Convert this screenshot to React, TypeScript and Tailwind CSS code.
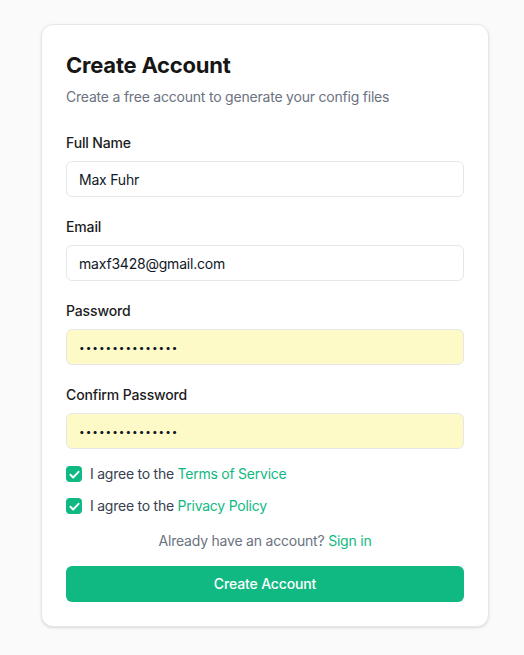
import React from "react";

function Check() {
  return (
    <span className="flex h-4 w-4 shrink-0 items-center justify-center rounded-[4px] bg-[#10b981]">
      <svg viewBox="0 0 24 24" className="h-[13px] w-[13px]" fill="none" stroke="white" strokeWidth={3.5} strokeLinecap="round" strokeLinejoin="round">
        <path d="M4.5 12.5l5 5L19.5 7" />
      </svg>
    </span>
  );
}

function Field({ label, value, password = false }: { label: string; value: string; password?: boolean }) {
  return (
    <div className="flex flex-col gap-2">
      <label className="text-sm font-medium leading-5 tracking-[-0.01em] text-[#1c1c1c]">{label}</label>
      <input
        readOnly
        type="text"
        value={value}
        className={
          "h-9 w-full rounded-md border border-[#e5e7eb] px-3 text-[#111827] outline-none " +
          (password ? "bg-[#fefac8] text-[10px] tracking-[1px]" : "bg-white text-sm tracking-[-0.015em]")
        }
      />
    </div>
  );
}

const dots = "•••••••••••••••";

export default function App() {
  return (
    <div className="min-h-[655px] bg-[#fafafa] pl-[41px] pt-[24px] pb-[30px]" style={{ fontFamily: "Inter, 'Noto Sans', sans-serif" }}>
      <div className="w-[448px] rounded-xl border border-[#e5e7eb] bg-white p-6 shadow-sm">
        <h1 className="text-[22px] font-bold leading-8 tracking-[-0.01em] text-[#161616]">Create Account</h1>
        <p className="mt-1.5 text-sm leading-5 tracking-[-0.015em] text-[#6b7280]">Create a free account to generate your config files</p>
        <div className="mt-[26px] flex flex-col gap-5">
          <Field label="Full Name" value="Max Fuhr" />
          <Field label="Email" value="maxf3428@gmail.com" />
          <Field label="Password" value={dots} password />
          <Field label="Confirm Password" value={dots} password />
        </div>
        <div className="mt-[15px] flex flex-col gap-3 tracking-[-0.015em]">
          <div className="flex items-center gap-2 text-sm leading-5 text-[#374151]">
            <Check />
            <span>
              I agree to the <a className="text-[#10b981]">Terms of Service</a>
            </span>
          </div>
          <div className="flex items-center gap-2 text-sm leading-5 text-[#374151]">
            <Check />
            <span>
              I agree to the <a className="text-[#10b981]">Privacy Policy</a>
            </span>
          </div>
        </div>
        <p className="mt-[15px] text-center text-sm leading-5 tracking-[-0.015em] text-[#6b7280]">
          Already have an account? <a className="text-[#10b981]">Sign in</a>
        </p>
        <button className="mt-[15px] h-9 w-full rounded-md bg-[#10b981] text-sm font-medium tracking-[-0.01em] text-white">Create Account</button>
      </div>
    </div>
  );
}
